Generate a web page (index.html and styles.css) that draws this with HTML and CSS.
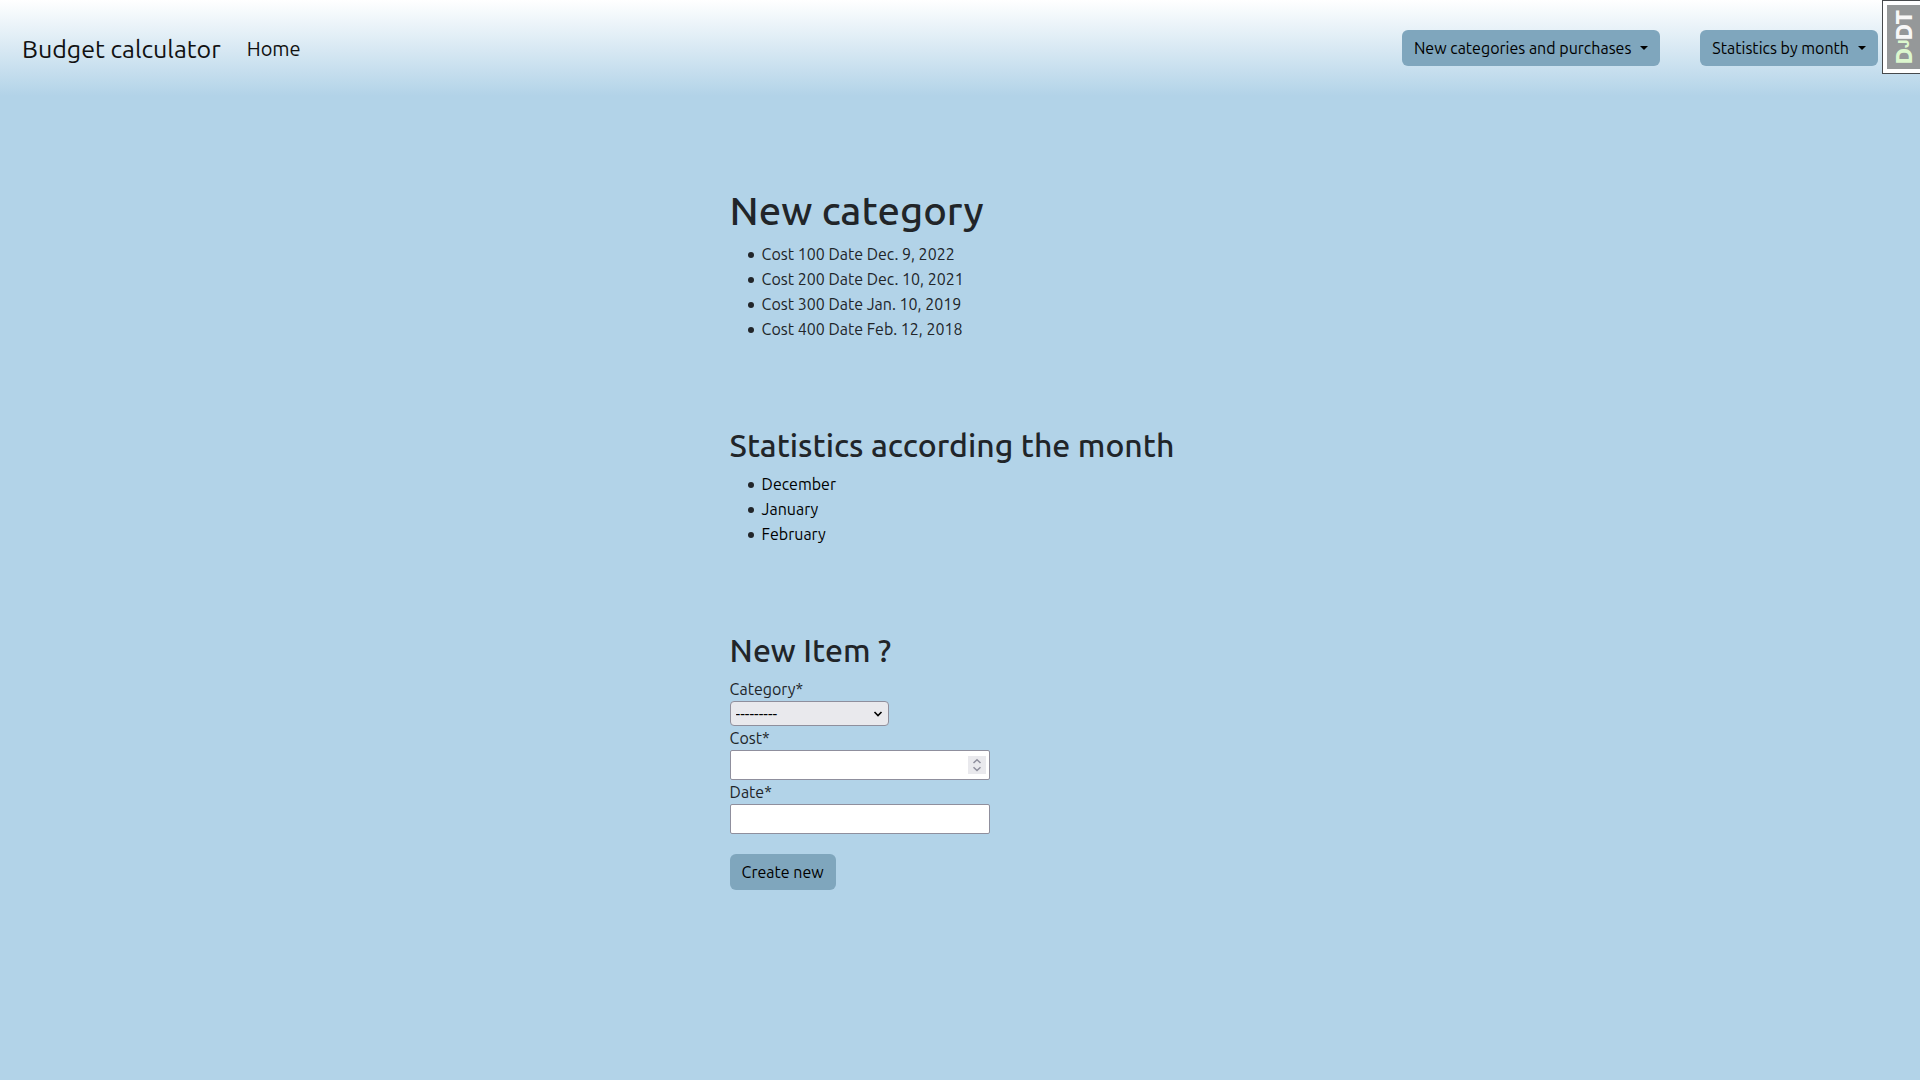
FILE: index.html
```html
<!DOCTYPE html>
<html lang="en">
<head>
<meta charset="utf-8">
<meta name="viewport" content="width=device-width, initial-scale=1">
<title>Budget calculator</title>
<link rel="stylesheet" href="styles.css">
</head>
<body>
<header class="navbar">
  <nav class="nav-links">
    <a class="brand" href="#">Budget calculator</a>
    <a class="nav-link" href="#">Home</a>
  </nav>
  <div class="nav-menus">
    <button class="btn dropdown" type="button">New categories and purchases</button>
    <button class="btn dropdown" type="button">Statistics by month</button>
  </div>
</header>
<a class="debug-handle" href="#" title="Show toolbar"><span class="debug-label"><span class="debug-d">D<small>J</small></span>DT</span></a>
<main class="content">
  <section class="block">
    <h1>New category</h1>
    <ul class="list">
      <li>Cost 100 Date Dec. 9, 2022</li>
      <li>Cost 200 Date Dec. 10, 2021</li>
      <li>Cost 300 Date Jan. 10, 2019</li>
      <li>Cost 400 Date Feb. 12, 2018</li>
    </ul>
  </section>
  <section class="block">
    <h2>Statistics according the month</h2>
    <ul class="list">
      <li><a href="#">December</a></li>
      <li><a href="#">January</a></li>
      <li><a href="#">February</a></li>
    </ul>
  </section>
  <section class="block">
    <h2>New Item ?</h2>
    <form class="form">
      <label for="category">Category*</label>
      <div class="select-wrap">
        <select id="category"><option>---------</option></select>
        <svg class="chevron" width="10" height="8" viewBox="0 0 10 8"><path d="M1.500 2 5 5.500 8.500 2" fill="none" stroke="#000" stroke-width="1.600"/></svg>
      </div>
      <label for="cost">Cost*</label>
      <div class="number-wrap">
        <input class="field" id="cost" type="number">
        <svg class="spinner" width="18" height="18" viewBox="0 0 18 18"><rect width="18" height="18" fill="#e9e9ed"/><path d="M5.500 7 9 3.700 12.500 7M5.500 11.200 9 14.500 12.500 11.200" fill="none" stroke="#8f8f9d" stroke-width="1.500"/></svg>
      </div>
      <label for="date">Date*</label>
      <input class="field" id="date" type="text">
      <button class="btn submit" type="button">Create new</button>
    </form>
  </section>
</main>
</body>
</html>
```
FILE: styles.css
```css
* { box-sizing: border-box; }

body {
  margin: 0;
  min-height: 100vh;
  background: #b2d3e8;
  color: #212529;
  font: 16px/24px Ubuntu, "Noto Sans", sans-serif;
}

h1, h2 {
  margin: 0 0 8px;
  font-weight: 500;
}
h1 { margin-bottom: 7px; font-size: 40px; line-height: 48px; }
h2 { font-size: 32px; line-height: 38px; }

.navbar {
  display: flex;
  justify-content: space-between;
  align-items: center;
  height: 96px;
  padding: 0 42px 0 22px;
  background: linear-gradient(#fff, #b2d3e8);
}
.nav-links {
  display: flex;
  align-items: center;
  gap: 26px;
  padding-top: 2px;
}
.nav-links a {
  color: #111;
  text-decoration: none;
}
.brand { font-size: 25px; line-height: 36px; }
.nav-link { font-size: 20px; }
.nav-menus {
  display: flex;
  gap: 40px;
}

.btn {
  height: 36px;
  padding: 0 12px;
  border: 0;
  border-radius: 6px;
  background: #7fa6bd;
  color: #000;
  font: inherit;
}
.dropdown {
  display: flex;
  align-items: center;
  gap: 9px;
}
.dropdown::after {
  content: "";
  border: 4px solid transparent;
  border-top-color: #000;
  border-bottom: 0;
}

.debug-handle {
  position: absolute;
  top: 0;
  right: 0;
  width: 38px;
  height: 74px;
  padding: 4px 0 4px 4px;
  border: 1px solid #474a4d;
  border-right: 0;
  background: #fff;
  text-decoration: none;
}
.debug-label {
  display: flex;
  align-items: center;
  justify-content: center;
  width: 100%;
  height: 100%;
  background: #959899;
  color: #f7f7f7;
  font: 800 22px/32px Inter, sans-serif;
  writing-mode: vertical-rl;
  transform: rotate(180deg);
}
.debug-d { color: #dcf7ce; }
.debug-d small { font-size: 14px; }

.content {
  display: flex;
  flex-direction: column;
  gap: 84px;
  margin: 91px 0 0 38%;
}
.list {
  margin: 0;
  padding-left: 18px;
  line-height: 25px;
  list-style: none;
}
.list li {
  display: flex;
  align-items: center;
  gap: 8px;
}
.list li::before {
  content: "";
  width: 6px;
  height: 6px;
  border-radius: 50%;
  background: #212529;
}
.list a {
  color: #000;
  text-decoration: none;
}

.form {
  display: flex;
  flex-direction: column;
  align-items: flex-start;
}
.select-wrap, .number-wrap {
  position: relative;
  display: flex;
}
select {
  appearance: none;
  width: 159px;
  height: 25px;
  padding: 0 5px;
  border: 1px solid #8f8f9d;
  border-radius: 4px;
  background: #e9e9ed;
  color: #000;
  font: inherit;
}
.chevron {
  position: absolute;
  top: 9px;
  right: 6px;
}
.field {
  width: 260px;
  height: 30px;
  padding: 0 4px;
  border: 1px solid #8f8f9d;
  border-radius: 2px;
  background: #fff;
  font: inherit;
  appearance: textfield;
}
.spinner {
  position: absolute;
  top: 6px;
  right: 4px;
}
.submit { margin-top: 20px; }
```
